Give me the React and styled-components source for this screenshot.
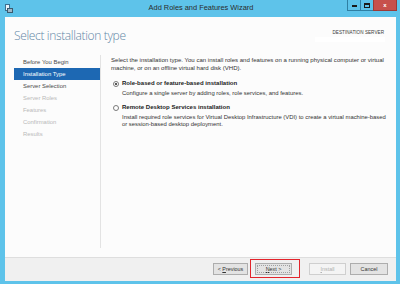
import styled, { createGlobalStyle } from 'styled-components';

const Global = createGlobalStyle`
  html, body { margin: 0; padding: 0; background: #5bc2e9; }
  * { box-sizing: border-box; }
`;

const Window = styled.div`
  width: 400px;
  height: 284px;
  background: #5ec3ea;
  display: flex;
  flex-direction: column;
  padding: 0 4px 3px 5px;
  font-family: "Liberation Sans", Arial, sans-serif;
  overflow: hidden;
`;

const TitleBar = styled.div`
  height: 17px;
  display: grid;
  grid-template-columns: 1fr auto 1fr;
  align-items: start;
  margin-right: -1px;
`;

const AppIcon = styled.svg`
  margin-top: 4px;
  display: block;
`;

const TitleText = styled.div`
  font-size: 7.4px;
  color: #2b2b2b;
  line-height: 16px;
`;

const Controls = styled.div`
  display: flex;
  justify-content: flex-end;
`;

const Ctrl = styled.div`
  width: ${p => p.w}px;
  height: 11px;
  background: ${p => (p.close ? '#c7504b' : '#5ec3ea')};
  border: 1px solid ${p => (p.close ? '#9c3a36' : '#2f7fa3')};
  border-top: none;
  margin-left: -1px;
  display: flex;
  align-items: center;
  justify-content: center;
`;

const MinGlyph = styled.div`
  width: 5px;
  height: 2px;
  margin-top: 2px;
  background: #1a1a1a;
`;

const MaxGlyph = styled.div`
  width: 6px;
  height: 5px;
  border: 1px solid #1a1a1a;
  border-top-width: 2px;
`;

const CloseGlyph = styled.div`
  font-size: 6px;
  font-weight: bold;
  color: #fff;
  line-height: 6px;
`;

const Client = styled.div`
  flex: 1;
  background: #fcfcfc;
  display: flex;
  flex-direction: column;
`;

const Header = styled.div`
  height: 38px;
  display: flex;
  justify-content: space-between;
  padding: 10px 12px 0 9px;
`;

const Heading = styled.h1`
  margin: 0;
  font-family: "Open Sans", "Liberation Sans", sans-serif;
  font-weight: 300;
  font-size: 12px;
  letter-spacing: -0.35px;
  line-height: 17px;
  color: #6286a6;
`;

const Destination = styled.div`
  display: flex;
  flex-direction: column;
  align-items: flex-end;
  padding-top: 3px;
`;

const DestLabel = styled.div`
  font-size: 4.6px;
  letter-spacing: 0.05px;
  color: #3a3a3a;
  line-height: 6px;
`;

const ServerBox = styled.div`
  width: 70px;
  height: 5px;
  background: #ffffff;
  margin-top: 1px;
  margin-right: -1px;
`;

const Main = styled.div`
  flex: 1;
  display: flex;
  padding-bottom: 9px;
  min-height: 0;
`;

const Nav = styled.div`
  width: 96px;
  flex-shrink: 0;
  padding: 1px 0 0 9px;
  border-right: 1px solid #e3e3e3;
`;

const NavItem = styled.div`
  height: 12px;
  line-height: 12px;
  padding-left: 9px;
  font-size: 5.9px;
  color: ${p => (p.active ? '#ffffff' : p.done ? '#4a4a4a' : '#b9b9b9')};
  background: ${p => (p.active ? '#1d68b3' : 'transparent')};
`;

const Content = styled.div`
  flex: 1;
  min-width: 0;
  padding: 2px 4px 0 10px;
  font-size: 6.05px;
  line-height: 7.5px;
  color: #333;
`;

const Para = styled.p`
  margin: 0;
  white-space: nowrap;
`;

const Option = styled.div`
  display: flex;
  align-items: flex-start;
  margin-top: ${p => p.gap}px;
`;

const Radio = styled.div`
  width: 6px;
  height: 6px;
  border-radius: 50%;
  border: 1px solid #7a7a7a;
  background: #fff;
  margin: 1px 3px 0 2px;
  display: flex;
  align-items: center;
  justify-content: center;
  flex-shrink: 0;
  &::after {
    content: '';
    width: 2px;
    height: 2px;
    border-radius: 50%;
    background: ${p => (p.checked ? '#222' : 'transparent')};
  }
`;

const OptionLabel = styled.div`
  font-weight: bold;
  color: #222;
  margin-bottom: 2px;
`;

const Detail = styled(Para)`
  font-size: 5.9px;
`;

const Footer = styled.div`
  height: 24px;
  background: #f0f0f0;
  border-top: 1px solid #dedede;
  display: flex;
  justify-content: flex-end;
  align-items: flex-start;
  padding: 5px 8px 0 0;
`;

const ButtonWrap = styled.div`
  position: relative;
  margin-left: ${p => p.ml}px;
`;

const Button = styled.div`
  width: ${p => p.w}px;
  height: 12px;
  border: 1px solid ${p => (p.disabled ? '#cfcfcf' : '#adadad')};
  background: ${p => (p.disabled ? '#f4f4f4' : '#e3e3e3')};
  font-size: 5.4px;
  color: ${p => (p.disabled ? '#b0b0b0' : '#333')};
  display: flex;
  align-items: center;
  justify-content: center;
  outline: ${p => (p.focus ? '1px dotted #a0a0a0' : 'none')};
  outline-offset: -3px;
`;

const Highlight = styled.div`
  position: absolute;
  left: -5px;
  top: -4px;
  width: 50px;
  height: 19px;
  border: 1px solid #e3242b;
  pointer-events: none;
`;

const steps = [
  ['Before You Begin', 'done'],
  ['Installation Type', 'active'],
  ['Server Selection', 'done'],
  ['Server Roles', ''],
  ['Features', ''],
  ['Confirmation', ''],
  ['Results', ''],
];

export default function App() {
  return (
    <>
      <Global />
      <Window>
        <TitleBar>
          <AppIcon width="8" height="9" viewBox="0 0 8 9">
            <rect x="0.5" y="0.5" width="4" height="6" fill="#e8f4fb" stroke="#3b6f8f" />
            <rect x="2.5" y="4.5" width="5" height="4" fill="#9fb7c7" stroke="#3b5a6e" />
          </AppIcon>
          <TitleText>Add Roles and Features Wizard</TitleText>
          <Controls>
            <Ctrl w={14}><MinGlyph /></Ctrl>
            <Ctrl w={14}><MaxGlyph /></Ctrl>
            <Ctrl w={24} close><CloseGlyph>x</CloseGlyph></Ctrl>
          </Controls>
        </TitleBar>
        <Client>
          <Header>
            <Heading>Select installation type</Heading>
            <Destination>
              <DestLabel>DESTINATION SERVER</DestLabel>
              <ServerBox />
            </Destination>
          </Header>
          <Main>
            <Nav>
              {steps.map(([label, state]) => (
                <NavItem key={label} active={state === 'active'} done={state === 'done'}>
                  {label}
                </NavItem>
              ))}
            </Nav>
            <Content>
              <Para>
                Select the installation type. You can install roles and features on a running physical computer or virtual
              </Para>
              <Para>machine, or on an offline virtual hard disk (VHD).</Para>
              <Option gap={8}>
                <Radio checked />
                <div>
                  <OptionLabel>Role-based or feature-based installation</OptionLabel>
                  <Detail>Configure a single server by adding roles, role services, and features.</Detail>
                </div>
              </Option>
              <Option gap={7}>
                <Radio />
                <div>
                  <OptionLabel>Remote Desktop Services installation</OptionLabel>
                  <Detail>
                    Install required role services for Virtual Desktop Infrastructure (VDI) to create a virtual machine-based
                  </Detail>
                  <Detail>or session-based desktop deployment.</Detail>
                </div>
              </Option>
            </Content>
          </Main>
          <Footer>
            <ButtonWrap ml={0}>
              <Button w={35}>&lt;&nbsp;<u>P</u>revious</Button>
            </ButtonWrap>
            <ButtonWrap ml={7}>
              <Button w={37} focus><u>N</u>ext &gt;</Button>
              <Highlight />
            </ButtonWrap>
            <ButtonWrap ml={17}>
              <Button w={37} disabled><u>I</u>nstall</Button>
            </ButtonWrap>
            <ButtonWrap ml={4}>
              <Button w={38}>Cancel</Button>
            </ButtonWrap>
          </Footer>
        </Client>
      </Window>
    </>
  );
}
